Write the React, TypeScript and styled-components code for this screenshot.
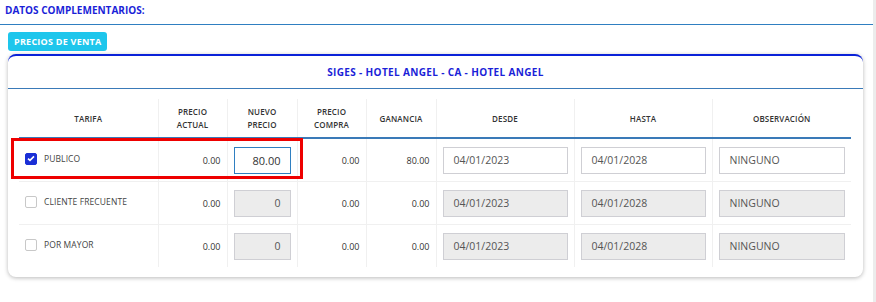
import { ReactElement } from 'react';
import styled, { createGlobalStyle } from 'styled-components';

const GlobalStyle = createGlobalStyle`
  body {
    margin: 0;
    background: #fff;
    font-family: 'Open Sans', 'Liberation Sans', sans-serif;
  }
`;

const Page = styled.div`
  display: flex;
  width: 876px;
  height: 302px;
  overflow: hidden;
`;

const Main = styled.div`
  flex: 1;
`;

const ScrollTrack = styled.div`
  width: 3px;
  background: #ececec;
`;

const SectionTitle = styled.div`
  height: 24px;
  padding-left: 5px;
  border-bottom: 1px solid #2f7fc1;
  color: #1b1fd8;
  font-size: 10px;
  font-weight: 700;
  line-height: 20px;
`;

const Badge = styled.div`
  display: inline-block;
  margin: 7px 0 0 8px;
  height: 19px;
  padding: 0 6px;
  border-radius: 3px;
  background: #1ec6ec;
  color: #fff;
  font-size: 9px;
  font-weight: 700;
  line-height: 19px;
  letter-spacing: 0.25px;
`;

const Card = styled.div`
  position: relative;
  margin: 3px 10px 0 8px;
  border-top: 2px solid #0a22d8;
  border-radius: 8px;
  background: #fff;
  box-shadow: 0 1px 4px rgba(0, 0, 0, 0.28);
  padding-bottom: 10px;
`;

const CardHeader = styled.div`
  height: 32px;
  border-bottom: 1px solid #3a7ab8;
  color: #1b1fd8;
  font-size: 10px;
  font-weight: 700;
  line-height: 32px;
  text-align: center;
  letter-spacing: 0.35px;
`;

const TableWrap = styled.div`
  position: relative;
  padding: 10px 12px 0 11px;
`;

const Table = styled.table`
  width: 832px;
  border-collapse: collapse;
  table-layout: fixed;
`;

const Th = styled.th`
  height: 38px;
  padding: 0 4px;
  border-bottom: 2px solid #3a7ab8;
  border-left: 1px solid #f0f0f0;
  color: #333;
  font-size: 8px;
  font-weight: 600;
  line-height: 13px;
  text-align: center;
  letter-spacing: 0.15px;
  &:first-child {
    border-left: none;
  }
`;

const Td = styled.td<{ $align?: string }>`
  height: 42px;
  padding: 0 6px;
  border-top: 1px solid #f0f0f0;
  border-left: 1px solid #f0f0f0;
  color: #333;
  font-size: 9px;
  text-align: ${(p) => p.$align || 'left'};
  vertical-align: middle;
  &:first-child {
    border-left: none;
  }
`;

const TarifaCell = styled.div`
  display: flex;
  align-items: center;
  gap: 7px;
  margin-top: -3px;
  color: #444;
  font-size: 8.5px;
  letter-spacing: 0.1px;
`;

const Check = styled.span<{ $checked?: boolean }>`
  display: inline-flex;
  align-items: center;
  justify-content: center;
  width: 12px;
  height: 12px;
  box-sizing: border-box;
  border-radius: 2px;
  border: 1px solid ${(p) => (p.$checked ? '#1a2fd6' : '#c8c8c8')};
  background: ${(p) => (p.$checked ? '#1a2fd6' : '#fff')};
`;

const Field = styled.div<{ $disabled?: boolean; $active?: boolean; $right?: boolean }>`
  height: 27px;
  box-sizing: border-box;
  border: 1px solid ${(p) => (p.$active ? '#2f7fc1' : '#cfcfd4')};
  background: ${(p) => (p.$disabled ? '#ececec' : '#fff')};
  color: ${(p) => (p.$active ? '#333' : '#555')};
  font-size: ${(p) => (p.$active ? '11px' : '10.5px')};
  line-height: 25px;
  padding: 0 ${(p) => (p.$right ? '9px' : '10px')};
  text-align: ${(p) => (p.$right ? 'right' : 'left')};
`;

const Highlight = styled.div`
  position: absolute;
  left: 3px;
  top: 49px;
  width: 292px;
  height: 41px;
  box-sizing: border-box;
  border: 3px solid #ee0000;
  pointer-events: none;
`;

interface Row {
  name: string;
  checked: boolean;
  actual: string;
  nuevo: string;
  compra: string;
  ganancia: string;
}

const rows: Row[] = [
  { name: 'PUBLICO', checked: true, actual: '0.00', nuevo: '80.00', compra: '0.00', ganancia: '80.00' },
  { name: 'CLIENTE FRECUENTE', checked: false, actual: '0.00', nuevo: '0', compra: '0.00', ganancia: '0.00' },
  { name: 'POR MAYOR', checked: false, actual: '0.00', nuevo: '0', compra: '0.00', ganancia: '0.00' },
];

const widths = [139, 69, 70, 69, 70, 138, 138, 139];

const App = (): ReactElement => {
  return (
    <Page>
      <GlobalStyle />
      <Main>
        <SectionTitle>DATOS COMPLEMENTARIOS:</SectionTitle>
        <Badge>PRECIOS DE VENTA</Badge>
        <Card>
          <CardHeader>SIGES - HOTEL ANGEL - CA - HOTEL ANGEL</CardHeader>
          <TableWrap>
            <Table>
              <colgroup>
                {widths.map((w, i) => <col key={i} style={{ width: w }} />)}
              </colgroup>
              <thead>
                <tr>
                  <Th>TARIFA</Th>
                  <Th>PRECIO<br />ACTUAL</Th>
                  <Th>NUEVO<br />PRECIO</Th>
                  <Th>PRECIO<br />COMPRA</Th>
                  <Th>GANANCIA</Th>
                  <Th>DESDE</Th>
                  <Th>HASTA</Th>
                  <Th>OBSERVACIÓN</Th>
                </tr>
              </thead>
              <tbody>
                {rows.map((row, i) => {
                  const disabled = !row.checked;
                  return (
                    <tr key={row.name}>
                      <Td style={i === 0 ? { borderTop: 'none' } : undefined}>
                        <TarifaCell>
                          <Check $checked={row.checked}>
                            {row.checked && (
                              <svg width="8" height="7" viewBox="0 0 8 7">
                                <path d="M1 3.6 L3 5.4 L7 1.4" stroke="#fff" strokeWidth="1.6" fill="none" />
                              </svg>
                            )}
                          </Check>
                          {row.name}
                        </TarifaCell>
                      </Td>
                      <Td $align="right">{row.actual}</Td>
                      <Td>
                        <Field $right $active={row.checked} $disabled={disabled}>{row.nuevo}</Field>
                      </Td>
                      <Td $align="right">{row.compra}</Td>
                      <Td $align="right">{row.ganancia}</Td>
                      <Td>
                        <Field $disabled={disabled}>04/01/2023</Field>
                      </Td>
                      <Td>
                        <Field $disabled={disabled}>04/01/2028</Field>
                      </Td>
                      <Td>
                        <Field $disabled={disabled}>NINGUNO</Field>
                      </Td>
                    </tr>
                  );
                })}
              </tbody>
            </Table>
            <Highlight />
          </TableWrap>
        </Card>
      </Main>
      <ScrollTrack />
    </Page>
  );
};

export default App;
